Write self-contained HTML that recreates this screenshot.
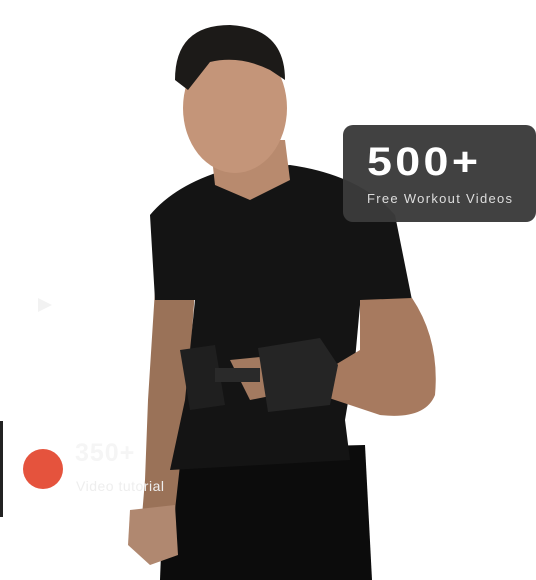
<!DOCTYPE html>
<html><head><style>
html,body{margin:0;padding:0;background:#fff;width:536px;height:580px;overflow:hidden;font-family:"Liberation Sans",sans-serif}
.card{position:absolute;left:343px;top:125px;width:193px;height:97px;background:#3b3b3b;border-radius:10px;opacity:.97}
.card .n{position:absolute;left:24px;top:15px;color:#fff;font-size:40px;font-weight:bold;letter-spacing:3px;transform:scaleX(1.12);transform-origin:left}
.card .t{position:absolute;left:24px;top:66px;color:#ddd;font-size:13px;letter-spacing:1.3px}
</style></head><body>
<svg width="536" height="580" style="position:absolute;left:0;top:0">
<path d="M165 450 L365 445 L372 580 L160 580 Z" fill="#0c0c0c"/>
<path d="M155 290 L195 290 L190 360 L185 420 L175 510 L165 540 L140 540 L145 480 L148 400 Z" fill="#9a7258"/>
<path d="M130 510 L175 505 L178 555 L150 565 L128 545 Z" fill="#b08870"/>
<path d="M150 215 Q175 185 225 170 L290 165 Q360 175 395 215 L412 300 L360 305 L355 360 L345 420 L350 460 L170 470 L185 400 L195 300 L155 300 Z" fill="#141414"/>
<path d="M360 300 L412 298 Q440 340 435 395 Q425 420 380 415 L320 395 L300 370 L335 365 L360 350 Z" fill="#a77a5f"/>
<path d="M230 360 L280 355 L300 390 L250 400 Z" fill="#a37a60"/>
<path d="M180 350 L215 345 L225 405 L190 410 Z" fill="#1f1f1f"/>
<path d="M258 348 L320 338 L338 365 L330 405 L268 412 Z" fill="#252525"/>
<rect x="215" y="368" width="45" height="14" fill="#2a2a2a"/>
<path d="M210 140 L285 140 L290 180 L250 200 L215 185 Z" fill="#b88a6e"/>
<ellipse cx="235" cy="108" rx="52" ry="65" fill="#c49579"/>
<path d="M175 80 Q175 25 230 25 Q285 28 285 80 L270 70 Q240 55 210 62 L188 90 Z" fill="#1c1a18"/>
</svg>
<div style="position:absolute;left:0;top:421px;width:3px;height:96px;background:#222"></div>
<div style="position:absolute;left:23px;top:449px;width:40px;height:40px;border-radius:50%;background:#e5533d"></div>
<div style="position:absolute;left:75px;top:439px;font-size:25px;font-weight:bold;color:#f5f5f5;letter-spacing:1px">350+</div>
<div style="position:absolute;left:76px;top:478px;font-size:14px;color:#eee;letter-spacing:.5px">Video tutorial</div>
<div style="position:absolute;left:38px;top:298px;width:0;height:0;border-left:14px solid #f2f2f2;border-top:7px solid transparent;border-bottom:7px solid transparent"></div>
<div class="card"><div class="n">500+</div><div class="t">Free Workout Videos</div></div>
</body></html>
